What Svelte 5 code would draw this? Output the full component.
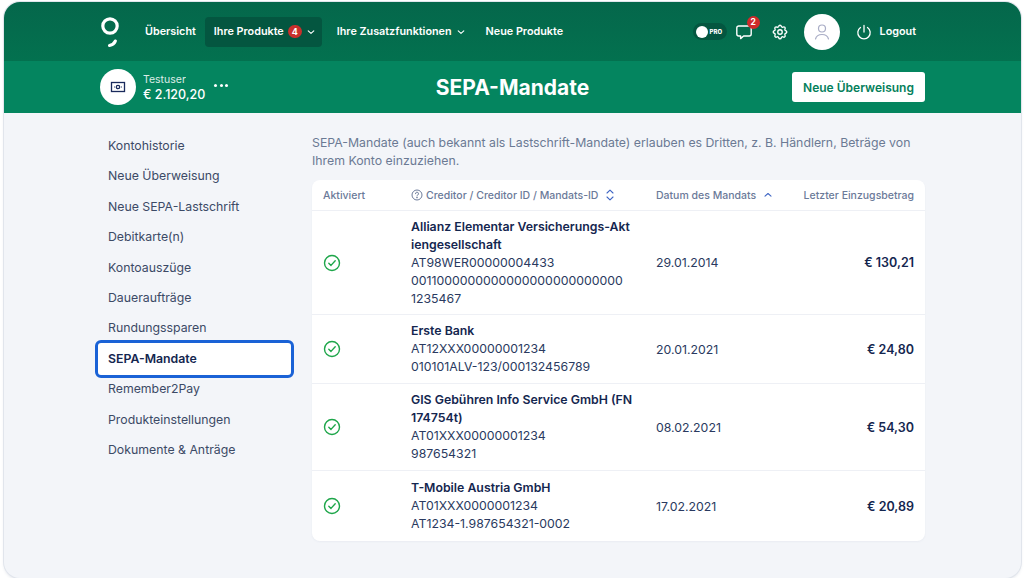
<script>
  const navItems = ['Kontohistorie', 'Neue Überweisung', 'Neue SEPA-Lastschrift', 'Debitkarte(n)', 'Kontoauszüge', 'Daueraufträge', 'Rundungssparen', 'SEPA-Mandate', 'Remember2Pay', 'Produkteinstellungen', 'Dokumente & Anträge'];
  const mandates = [
    { name: ['Allianz Elementar Versicherungs-Akt', 'iengesellschaft'], ids: ['AT98WER00000004433', '0011000000000000000000000000', '1235467'], date: '29.01.2014', amount: '€ 130,21', cls: 'r1' },
    { name: ['Erste Bank'], ids: ['AT12XXX00000001234', '010101ALV-123/000132456789'], date: '20.01.2021', amount: '€ 24,80', cls: 'r2' },
    { name: ['GIS Gebühren Info Service GmbH (FN', '174754t)'], ids: ['AT01XXX00000001234', '987654321'], date: '08.02.2021', amount: '€ 54,30', cls: 'r3' },
    { name: ['T-Mobile Austria GmbH'], ids: ['AT01XXX0000001234', 'AT1234-1.987654321-0002'], date: '17.02.2021', amount: '€ 20,89', cls: 'r4' }
  ];
</script>

<div class="window">
  <header class="topbar">
    <svg class="logo" width="20" height="32" viewBox="0 0 20 32" fill="none" stroke="#fff" stroke-linecap="round">
      <circle cx="10" cy="10" r="7.2" stroke-width="3.2" />
      <path d="M9.5 29.5c2.8-.6 4.8-2 5.8-4.4" stroke-width="3.2" />
    </svg>
    <nav class="mainnav">
      <span class="link">Übersicht</span>
      <span class="link active">Ihre Produkte <b class="count">4</b>
        <svg width="8" height="8" viewBox="0 0 8 8" fill="none" stroke="#fff" stroke-width="1.1" stroke-linecap="round" stroke-linejoin="round"><path d="M1.2 2.8 4 5.4l2.8-2.6" /></svg>
      </span>
      <span class="link">Ihre Zusatzfunktionen
        <svg width="8" height="8" viewBox="0 0 8 8" fill="none" stroke="#fff" stroke-width="1.1" stroke-linecap="round" stroke-linejoin="round"><path d="M1.2 2.8 4 5.4l2.8-2.6" /></svg>
      </span>
      <span class="link">Neue Produkte</span>
    </nav>
    <div class="tools">
      <div class="pro"><i></i><span>PRO</span></div>
      <div class="chat">
        <svg width="18" height="18" viewBox="0 0 18 18" fill="none" stroke="#fff" stroke-width="1.4" stroke-linejoin="round"><path d="M3.8 3h10.4A2 2 0 0 1 16.2 5v6a2 2 0 0 1-2 2H8.6l-3 2.6V13H3.8a2 2 0 0 1-2-2V5a2 2 0 0 1 2-2Z" /></svg>
        <b>2</b>
      </div>
      <svg class="gear" width="18" height="18" viewBox="0 0 24 24" fill="none" stroke="#fff" stroke-width="1.8" stroke-linecap="round" stroke-linejoin="round">
        <path d="M10.3 4.3c.4-1.8 3-1.8 3.4 0a1.7 1.7 0 0 0 2.6 1.1c1.5-.9 3.3.8 2.4 2.4a1.7 1.7 0 0 0 1 2.5c1.8.4 1.8 3 0 3.4a1.7 1.7 0 0 0-1 2.6c.9 1.5-.9 3.3-2.4 2.4a1.7 1.7 0 0 0-2.6 1c-.4 1.8-3 1.8-3.4 0a1.7 1.7 0 0 0-2.6-1c-1.5.9-3.3-.9-2.4-2.4a1.7 1.7 0 0 0-1-2.6c-1.8-.4-1.8-3 0-3.4a1.7 1.7 0 0 0 1-2.5c-.9-1.6.9-3.3 2.4-2.4 1 .6 2.3.1 2.6-1.1Z" />
        <circle cx="12" cy="12" r="3" />
      </svg>
      <div class="avatar">
        <svg width="18" height="18" viewBox="0 0 18 18" fill="none" stroke="#a9adc6" stroke-width="1.2" stroke-linecap="round"><circle cx="9" cy="5.5" r="3.5" /><path d="M2.5 16c.8-3 3.4-4.5 6.5-4.5s5.700 1.500 6.500 4.500" /></svg>
      </div>
      <div class="logout">
        <svg width="16" height="16" viewBox="0 0 16 16" fill="none" stroke="#fff" stroke-width="1.3" stroke-linecap="round"><path d="M8 1.500v6.500M4.500 3.500a6.200 6.200 0 1 0 7 0" /></svg>
        <span>Logout</span>
      </div>
    </div>
  </header>

  <section class="subbar">
    <div class="account">
      <div class="acc-icon">
        <svg width="16" height="14" viewBox="0 0 16 14" fill="none" stroke="#1a2a5c" stroke-width="1.3"><rect x="1.500" y="2.500" width="13" height="9" /><circle cx="8" cy="7" r="1.700" /><path d="M4 7h.6M11.400 7h.6" /></svg>
      </div>
      <div class="acc-text">
        <span class="user">Testuser</span>
        <span class="balance">€ 2.120,20</span>
      </div>
      <div class="dots"><i></i><i></i><i></i></div>
    </div>
    <h1>SEPA-Mandate</h1>
    <button class="primary">Neue Überweisung</button>
  </section>

  <main class="content">
    <aside class="sidebar">
      {#each navItems as item}
        <div class="side-item" class:selected={item === 'SEPA-Mandate'}>{item}</div>
      {/each}
    </aside>
    <div class="panel">
      <p class="intro">SEPA-Mandate (auch bekannt als Lastschrift-Mandate) erlauben es Dritten, z. B. Händlern, Beträge von Ihrem Konto einzuziehen.</p>
      <div class="table">
        <div class="row head">
          <div>Aktiviert</div>
          <div class="th-creditor">
            <svg width="12" height="12" viewBox="0 0 12 12" fill="none" stroke="#6b7a99" stroke-width="1"><circle cx="6" cy="6" r="5" /><path d="M4.500 4.700a1.500 1.500 0 1 1 2.200 1.300c-.5.300-.7.500-.7 1" stroke-linecap="round" /><circle cx="6" cy="8.700" r=".4" /></svg>
            Creditor / Creditor ID / Mandats-ID
            <svg class="sort" width="8" height="12" viewBox="0 0 8 12" fill="none" stroke="#3f66c4" stroke-width="1.100" stroke-linecap="round" stroke-linejoin="round"><path d="M1 4 4 1.200 7 4M1 8l3 2.800L7 8" /></svg>
          </div>
          <div class="th-date">Datum des Mandats
            <svg class="sort" width="8" height="6" viewBox="0 0 8 6" fill="none" stroke="#3f66c4" stroke-width="1.100" stroke-linecap="round" stroke-linejoin="round"><path d="M1 4.200 4 1.500l3 2.700" /></svg>
          </div>
          <div class="amount-h">Letzter Einzugsbetrag</div>
        </div>
        {#each mandates as m}
          <div class="row {m.cls}">
            <div>
              <svg class="check" width="18" height="18" viewBox="0 0 18 18" fill="none" stroke="#1ea64a" stroke-width="1.400" stroke-linecap="round" stroke-linejoin="round"><circle cx="9" cy="9" r="7.500" /><path d="m5.800 9.200 2.200 2.200 4.200-4.600" /></svg>
            </div>
            <div class="creditor">
              {#each m.name as line}<strong>{line}</strong>{/each}
              {#each m.ids as line}<span>{line}</span>{/each}
            </div>
            <div class="date">{m.date}</div>
            <div class="amount">{m.amount}</div>
          </div>
        {/each}
      </div>
    </div>
  </main>
</div>

<style>
  :global(body) {
    background: #fff;
    font-family: Inter, "Noto Sans", sans-serif;
  }
  .window {
    margin: 2px 3px 0 4px;
    height: 576px;
    border-radius: 16px;
    overflow: hidden;
    background: #f3f5f9;
    box-shadow: 0 0 0 1px #e1e5ec, 0 2px 3px rgba(60, 80, 120, 0.15);
    display: flex;
    flex-direction: column;
  }
  .topbar {
    height: 59px;
    flex: none;
    background: linear-gradient(180deg, #05674b, #03714f);
    display: flex;
    align-items: center;
    padding: 0 105px 0 96px;
    color: #fff;
  }
  .logo {
    flex: none;
    margin-top: 1px;
  }
  .mainnav {
    display: flex;
    align-items: center;
    margin-left: 16px;
    font-size: 10.8px;
    font-weight: 600;
  }
  .link {
    display: flex;
    align-items: center;
    gap: 5px;
    padding: 0 9px;
    height: 30px;
    white-space: nowrap;
  }
  .link:first-child {
    padding-left: 9px;
  }
  .link.active {
    background: #045640;
    border-radius: 4px;
    margin: 0 6px 0 0;
    padding: 0 7px 0 9px;
  }
  .link:last-child {
    margin-left: 3px;
  }
  .count {
    width: 14px;
    height: 13px;
    margin-left: -1px;
    border-radius: 7px;
    background: #c9302c;
    font-size: 9px;
    font-weight: 700;
    display: flex;
    align-items: center;
    justify-content: center;
  }
  .tools {
    margin-left: auto;
    display: flex;
    align-items: center;
  }
  .pro {
    width: 34px;
    height: 17px;
    border-radius: 9px;
    background: #045640;
    display: flex;
    align-items: center;
    gap: 2px;
    padding-left: 2px;
    box-sizing: border-box;
  }
  .pro i {
    width: 12px;
    height: 12px;
    border-radius: 50%;
    background: #fff;
    flex: none;
    margin-left: 1px;
  }
  .pro span {
    font-size: 6px;
    font-weight: 800;
    letter-spacing: 0;
  }
  .chat {
    position: relative;
    width: 18px;
    height: 18px;
    margin-left: 8px;
  }
  .chat b {
    position: absolute;
    top: -7px;
    right: -7px;
    width: 13px;
    height: 13px;
    border-radius: 50%;
    background: #cf2a2a;
    font-size: 8.5px;
    display: flex;
    align-items: center;
    justify-content: center;
  }
  .gear {
    margin-left: 18px;
  }
  .avatar {
    width: 36px;
    height: 36px;
    border-radius: 50%;
    background: #fff;
    margin-left: 15px;
    display: flex;
    align-items: center;
    justify-content: center;
  }
  .logout {
    display: flex;
    align-items: center;
    gap: 8px;
    margin-left: 16px;
    font-size: 10.8px;
    font-weight: 600;
  }
  .subbar {
    height: 52px;
    flex: none;
    background: #04855f;
    display: flex;
    align-items: center;
    position: relative;
    padding: 0 96px;
    color: #fff;
  }
  .account {
    display: flex;
    align-items: center;
  }
  .acc-icon {
    width: 36px;
    height: 36px;
    border-radius: 50%;
    background: #fff;
    display: flex;
    align-items: center;
    justify-content: center;
  }
  .acc-text {
    display: flex;
    flex-direction: column;
    margin-left: 7px;
    line-height: 15px;
  }
  .user {
    font-size: 10.5px;
    opacity: 0.85;
  }
  .balance {
    font-size: 12.5px;
    font-weight: 500;
  }
  .dots {
    display: flex;
    gap: 2.500px;
    margin: -4px 0 0 9px;
  }
  .dots i {
    width: 3px;
    height: 3px;
    border-radius: 50%;
    background: #fff;
  }
  h1 {
    position: absolute;
    left: 0;
    right: 0;
    margin: 0;
    text-align: center;
    font-size: 21px;
    font-weight: 700;
    pointer-events: none;
  }
  .primary {
    margin-left: auto;
    height: 30px;
    width: 133px;
    border: 0;
    border-radius: 3px;
    background: #fff;
    color: #04805b;
    font: 600 12px Inter, sans-serif;
    padding: 0;
  }
  .content {
    display: flex;
    padding: 0 96px 0 91px;
  }
  .sidebar {
    width: 199px;
    flex: none;
    padding-top: 18px;
    margin-right: 18px;
  }
  .side-item {
    height: 30.400px;
    line-height: 30.400px;
    padding-left: 13px;
    font-size: 12.3px;
    color: #3c4a66;
    box-sizing: border-box;
  }
  .side-item.selected {
    height: 38px;
    line-height: 32px;
    margin: -4px 0 -3.400px;
    border: 3px solid #1a62d6;
    border-radius: 6px;
    background: #fff;
    padding-left: 10px;
    font-weight: 600;
    color: #14264f;
    position: relative;
  }
  .panel {
    flex: 1;
    min-width: 0;
  }
  .intro {
    margin: 21px 0 10px;
    font-size: 12.300px;
    line-height: 18px;
    color: #6b7a94;
  }
  .table {
    background: #fff;
    border-radius: 8px;
    box-shadow: 0 1px 2px rgba(60, 80, 120, 0.05);
  }
  .row {
    display: grid;
    grid-template-columns: 88px 245px 130px 1fr;
    align-items: center;
    padding: 0 11px;
    border-bottom: 1px solid #eef0f5;
    font-size: 12.300px;
    color: #2a3a60;
    box-sizing: border-box;
  }
  .row:last-child {
    border-bottom: 0;
  }
  .row.head {
    height: 31px;
    font-size: 10.500px;
    font-weight: 500;
    color: #6b7a99;
  }
  .r1 { height: 104px; }
  .r2 { height: 69px; }
  .r3 { height: 87px; }
  .r4 { height: 70px; }
  .th-creditor, .th-date {
    display: flex;
    align-items: center;
    gap: 3px;
    white-space: nowrap;
  }
  .sort {
    margin-left: 5px;
  }
  .amount-h {
    text-align: right;
    white-space: nowrap;
  }
  .check {
    display: block;
  }
  .creditor {
    line-height: 18px;
    white-space: nowrap;
  }
  .creditor strong, .creditor span {
    display: block;
  }
  .creditor strong {
    font-weight: 600;
    color: #14264f;
  }
  .amount {
    text-align: right;
    font-weight: 600;
    color: #14264f;
    font-size: 12.500px;
  }
</style>
